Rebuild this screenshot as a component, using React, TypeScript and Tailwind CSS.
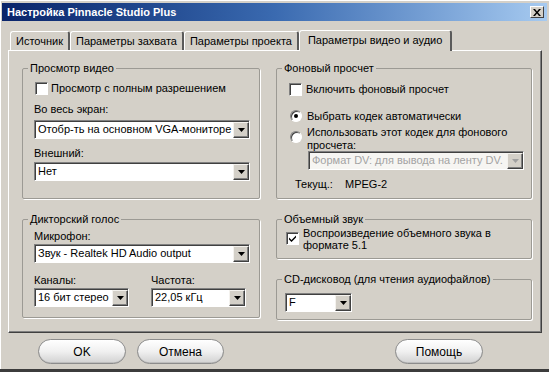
import React from 'react';

const Arrow = ({ disabled }: { disabled?: boolean }) => (
  <svg width="7" height="4" viewBox="0 0 7 4">
    <path d="M0 0h7L3.5 4z" fill={disabled ? '#a0a0a0' : '#000'} />
  </svg>
);

type SelectProps = { value: string; className: string; disabled?: boolean };

const Select: React.FC<SelectProps> = ({ value, className, disabled }) => (
  <div
    className={`relative flex h-[19px] border border-[#808080] border-b-white border-r-white shadow-[inset_1px_1px_0_#404040] ${
      disabled ? 'bg-[#f6f5f2] text-[#a3a3a3]' : 'bg-white text-black'
    } ${className}`}
  >
    <span className="flex-1 pl-[3px] leading-[17px] whitespace-nowrap overflow-hidden">{value}</span>
    <span className="w-[16px] mt-[1px] flex items-center justify-center bg-[#d4d0c8] border border-[#f4f2ee] border-b-[#404040] border-r-[#404040] shadow-[inset_-1px_-1px_0_#808080]">
      <Arrow disabled={disabled} />
    </span>
  </div>
);

const Check = ({ checked }: { checked?: boolean }) => (
  <span className="w-[13px] h-[13px] shrink-0 bg-white border border-[#808080] border-b-white border-r-white shadow-[inset_1px_1px_0_#404040] flex items-center justify-center">
    {checked && (
      <svg width="7" height="7" viewBox="0 0 7 7">
        <path d="M0 2.5l2.5 2.5L7 0.5v2L2.5 7 0 4.5z" fill="#000" />
      </svg>
    )}
  </span>
);

const Radio = ({ checked }: { checked?: boolean }) => (
  <span className="w-[12px] h-[12px] shrink-0 rounded-full bg-white border border-[#808080] border-b-white border-r-white shadow-[inset_1px_1px_0_#404040] flex items-center justify-center">
    {checked && <span className="w-[4px] h-[4px] rounded-full bg-black" />}
  </span>
);

type GroupProps = { title: string; className: string; bodyClass: string; children: React.ReactNode };

const Group: React.FC<GroupProps> = ({ title, className, bodyClass, children }) => (
  <fieldset className={`border border-[#9c9a94] shadow-[1px_1px_0_#fff] rounded-[2px] ${className}`}>
    <legend className="ml-[5px] px-[2px] leading-[14px]">{title}</legend>
    <div className={bodyClass}>{children}</div>
  </fieldset>
);

const Button = ({ label, className }: { label: string; className: string }) => (
  <button
    className={`h-[25px] rounded-full border border-[#8c8c8c] bg-gradient-to-b from-white via-[#f0f0f0] to-[#d2d2d2] shadow-[inset_0_-1px_0_#bdbdbd] text-[12px] ${className}`}
  >
    {label}
  </button>
);

export default function App() {
  const tabs = ['Источник', 'Параметры захвата', 'Параметры проекта'];
  return (
    <div className="w-[549px] h-[372px] bg-[#d4d0c8] font-['Liberation_Sans',Arial,sans-serif] text-[11px] text-black flex flex-col overflow-hidden shadow-[inset_1px_1px_0_#fff]">
      {/* Title bar */}
      <div className="mt-[3px] mx-[2px] h-[18px] flex items-center justify-between pl-[5px] pr-[3px] bg-gradient-to-r from-[#0a246a] via-[#3a6ab0] to-[#a6caf0]">
        <span className="text-white font-bold text-[11px] leading-[18px]">Настройка Pinnacle Studio Plus</span>
        <span className="w-[14px] h-[12px] flex items-center justify-center bg-[#d4d0c8] border border-white border-b-[#404040] border-r-[#404040]">
          <svg width="8" height="7" viewBox="0 0 8 7">
            <path d="M0 0h2l2 2.5L6 0h2L5 3.5 8 7H6L4 4.5 2 7H0l3-3.5z" fill="#000" />
          </svg>
        </span>
      </div>

      {/* Tabs */}
      <div className="mt-[8px] h-[21px] flex items-end pl-[10px]">
        {tabs.map((t) => (
          <div
            key={t}
            className="h-[19px] px-[5px] flex items-center border-t border-l border-white border-r-2 border-r-[#5a5a5a] rounded-t-[3px] leading-[14px]"
          >
            {t}
          </div>
        ))}
        <div className="relative z-10 h-[21px] -mb-[1px] px-[8px] pb-[2px] flex items-center bg-[#d4d0c8] border-t border-l border-white border-r-2 border-r-[#5a5a5a] rounded-t-[3px] leading-[14px]">
          Параметры видео и аудио
        </div>
      </div>

      {/* Panel */}
      <div className="ml-[8px] w-[534px] h-[283px] border border-white border-b-[#404040] border-r-[#404040] shadow-[inset_-1px_-1px_0_#808080] flex gap-[16px] pl-[13px] pt-[10px]">
        {/* Left column */}
        <div className="w-[238px] flex flex-col gap-[13px]">
          <Group title="Просмотр видео" className="h-[138px]" bodyClass="pl-[11px]">
            <div className="mt-[7px] ml-[1px] flex items-center gap-[3px] leading-[13px]">
              <Check />
              <span>Просмотр с полным разрешением</span>
            </div>
            <div className="mt-[7px] leading-[14px]">Во весь экран:</div>
            <Select value="Отобр-ть на основном VGA-мониторе" className="mt-[4px] w-[216px]" />
            <div className="mt-[7px] leading-[14px]">Внешний:</div>
            <Select value="Нет" className="mt-[2px] w-[216px]" />
          </Group>

          <Group title="Дикторский голос" className="h-[106px]" bodyClass="pl-[11px]">
            <div className="mt-[3px] leading-[14px]">Микрофон:</div>
            <Select value="Звук - Realtek HD Audio output" className="mt-[1px] w-[216px]" />
            <div className="mt-[10px] flex gap-[22px]">
              <div className="w-[95px]">
                <div className="leading-[14px]">Каналы:</div>
                <Select value="16 бит стерео" className="mt-[1px] w-[95px]" />
              </div>
              <div className="w-[95px]">
                <div className="leading-[14px]">Частота:</div>
                <Select value="22,05 кГц" className="mt-[1px] w-[95px]" />
              </div>
            </div>
          </Group>
        </div>

        {/* Right column */}
        <div className="w-[256px] flex flex-col gap-[13px]">
          <Group title="Фоновый просчет" className="h-[138px]" bodyClass="pl-[12px]">
            <div className="mt-[8px] flex items-center gap-[4px] leading-[13px]">
              <Check />
              <span>Включить фоновый просчет</span>
            </div>
            <div className="mt-[13px] ml-[1px] flex items-center gap-[5px] leading-[14px]">
              <Radio checked />
              <span>Выбрать кодек автоматически</span>
            </div>
            <div className="mt-[3px] ml-[1px] h-[25px] flex items-start gap-[5px]">
              <span className="mt-[5px]">
                <Radio />
              </span>
              <span className="leading-[13px]">
                Использовать этот кодек для фонового
                <br />
                просчета:
              </span>
            </div>
            <Select value="Формат DV: для вывода на ленту DV." className="ml-[19px] w-[216px]" disabled />
            <div className="mt-[7px] ml-[6px] flex leading-[14px]">
              <span className="w-[50px]">Текущ.:</span>
              <span>MPEG-2</span>
            </div>
          </Group>

          <Group title="Объемный звук" className="h-[47px]" bodyClass="pl-[9px]">
            <div className="mt-[1px] flex items-start gap-[4px] leading-[12px]">
              <span className="mt-[5px]">
                <Check checked />
              </span>
              <span>
                Воспроизведение объемного звука в
                <br />
                формате 5.1
              </span>
            </div>
          </Group>

          <Group title="CD-дисковод (для чтения аудиофайлов)" className="h-[48px]" bodyClass="pl-[8px]">
            <Select value="F" className="mt-[7px] w-[67px]" />
          </Group>
        </div>
      </div>

      {/* Buttons */}
      <div className="mt-[6px] flex pl-[38px] pr-[66px]">
        <Button label="OK" className="w-[88px]" />
        <Button label="Отмена" className="ml-[11px] w-[87px]" />
        <Button label="Помощь" className="ml-auto w-[88px]" />
      </div>

      <div className="mt-auto h-[3px] bg-[#3c3c3c]" />
    </div>
  );
}
